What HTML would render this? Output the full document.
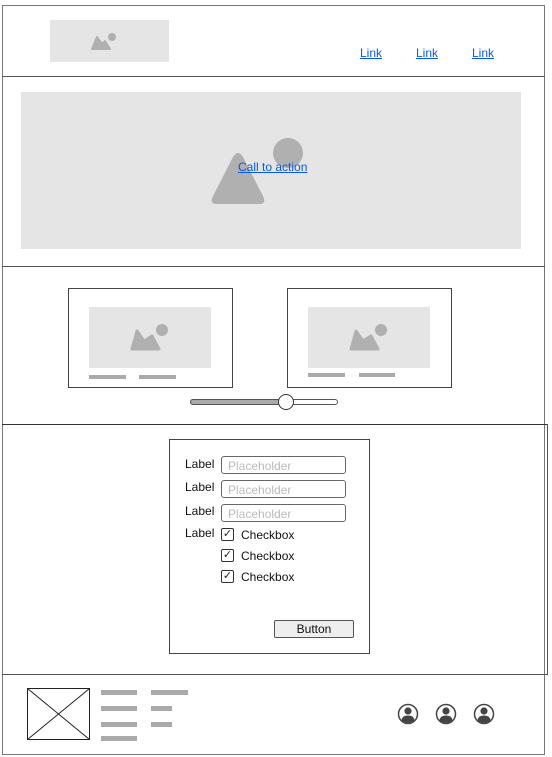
<!DOCTYPE html>
<html><head><style>
*{margin:0;padding:0;box-sizing:border-box}
body{width:552px;height:757px;background:#fff;position:relative;font-family:"Liberation Sans",Arial,sans-serif;overflow:hidden}
.a{position:absolute}
.g{background:#e5e5e5}
.bar{position:absolute;background:#aaa;height:4px}
a{color:#0a5ae0;font-size:12px;text-decoration:underline;position:absolute}
.lbl{position:absolute;font-size:12px;color:#111}
.inp{position:absolute;left:221px;width:125px;height:18px;border:1px solid #666;border-radius:3px;font-size:12px;color:#bbb;padding:2px 0 0 6px}
.cb{position:absolute;left:221px;width:13px;height:13px;border:1px solid #333;border-radius:2px;font-size:11px;line-height:11px;text-align:center;color:#222}
.ct{position:absolute;left:241px;font-size:12px;color:#111}
</style></head><body>
<div class="a" style="left:2px;top:5px;width:543px;height:750px;border:1px solid #777"></div>
<div class="a" style="left:2px;top:76px;width:543px;height:1px;background:#555"></div>
<div class="a" style="left:2px;top:266px;width:543px;height:1px;background:#555"></div>
<div class="a" style="left:2px;top:424px;width:546px;height:1px;background:#333"></div>
<div class="a" style="left:547px;top:424px;width:1px;height:251px;background:#555"></div>
<div class="a" style="left:2px;top:674px;width:546px;height:1px;background:#555"></div>

<div class="a g" style="left:50px;top:20px;width:119px;height:42px"></div>
<svg class="a" style="left:91px;top:30px" width="36" height="24"><circle cx="21" cy="7" r="4" fill="#b0b0b0"/><path d="M1 19 L6 7 L11 14 L14 11 L19 19 Z" fill="#b0b0b0" stroke="#b0b0b0" stroke-width="2" stroke-linejoin="round"/></svg>
<a style="left:360px;top:46px">Link</a>
<a style="left:416px;top:46px">Link</a>
<a style="left:472px;top:46px">Link</a>

<div class="a g" style="left:21px;top:92px;width:500px;height:157px"></div>
<svg class="a" style="left:200px;top:130px" width="130" height="80"><circle cx="88" cy="23" r="15" fill="#b0b0b0"/><path d="M17 74 Q9 74 13 66 L32 29 Q38 17 44 29 L63 66 Q67 74 59 74 Z" fill="#b0b0b0"/></svg>
<a style="left:238px;top:160px">Call to action</a>

<div class="a" style="left:68px;top:288px;width:165px;height:100px;border:1px solid #444"></div>
<div class="a g" style="left:89px;top:307px;width:122px;height:61px"></div>
<svg class="a" style="left:126px;top:320px" width="50" height="34"><circle cx="36" cy="10" r="6" fill="#b0b0b0"/><path d="M6 29 L11 11 L18 21 L26 16 L33 29 Z" fill="#b0b0b0" stroke="#b0b0b0" stroke-width="3" stroke-linejoin="round"/></svg>
<div class="bar" style="left:89px;top:375px;width:37px;height:4px"></div>
<div class="bar" style="left:139px;top:375px;width:37px;height:4px"></div>

<div class="a" style="left:287px;top:288px;width:165px;height:100px;border:1px solid #444"></div>
<div class="a g" style="left:308px;top:307px;width:122px;height:61px"></div>
<svg class="a" style="left:345px;top:320px" width="50" height="34"><circle cx="36" cy="10" r="6" fill="#b0b0b0"/><path d="M6 29 L11 11 L18 21 L26 16 L33 29 Z" fill="#b0b0b0" stroke="#b0b0b0" stroke-width="3" stroke-linejoin="round"/></svg>
<div class="bar" style="left:308px;top:373px;width:37px;height:4px"></div>
<div class="bar" style="left:359px;top:373px;width:36px;height:4px"></div>

<div class="a" style="left:190px;top:399px;width:148px;height:6px;border:1px solid #555;border-radius:3px"></div>
<div class="a" style="left:190px;top:399px;width:96px;height:6px;border:1px solid #555;border-radius:3px;background:#aaa"></div>
<div class="a" style="left:278px;top:394px;width:16px;height:16px;border:1px solid #333;border-radius:50%;background:#fff"></div>

<div class="a" style="left:169px;top:439px;width:201px;height:215px;border:1px solid #444"></div>
<div class="lbl" style="left:185px;top:457px">Label</div>
<div class="lbl" style="left:185px;top:480px">Label</div>
<div class="lbl" style="left:185px;top:504px">Label</div>
<div class="lbl" style="left:185px;top:526px">Label</div>
<div class="inp" style="top:456px">Placeholder</div>
<div class="inp" style="top:480px">Placeholder</div>
<div class="inp" style="top:504px">Placeholder</div>
<div class="cb" style="top:528px">✓</div><div class="ct" style="top:528px">Checkbox</div>
<div class="cb" style="top:549px">✓</div><div class="ct" style="top:549px">Checkbox</div>
<div class="cb" style="top:570px">✓</div><div class="ct" style="top:570px">Checkbox</div>
<div class="a" style="left:274px;top:620px;width:80px;height:18px;border:1px solid #555;border-radius:2px;background:#eee;font-size:12px;text-align:center;line-height:16px;color:#111">Button</div>

<svg class="a" style="left:27px;top:688px" width="64" height="53"><rect x="0.5" y="0.5" width="62" height="51" fill="none" stroke="#222"/><path d="M0.5 0.5 L62.5 51.5 M62.5 0.5 L0.5 51.5" stroke="#222"/></svg>
<div class="bar" style="left:101px;top:690px;width:36px;height:5px"></div>
<div class="bar" style="left:101px;top:706px;width:36px;height:5px"></div>
<div class="bar" style="left:101px;top:722px;width:36px;height:5px"></div>
<div class="bar" style="left:101px;top:736px;width:36px;height:5px"></div>
<div class="bar" style="left:151px;top:690px;width:37px;height:5px"></div>
<div class="bar" style="left:151px;top:706px;width:21px;height:5px"></div>
<div class="bar" style="left:151px;top:722px;width:21px;height:5px"></div>
<svg class="a" style="left:396px;top:702px" width="100" height="24">
<g id="av"><circle cx="12" cy="12" r="9.5" fill="#fff" stroke="#444" stroke-width="1.5"/><circle cx="12" cy="9" r="3.6" fill="#444"/><path d="M5.5 18.5 Q6 13.5 12 13.5 Q18 13.5 18.5 18.5 Q12 23 5.5 18.5Z" fill="#444"/></g>
<use href="#av" x="38"/><use href="#av" x="76"/>
</svg>
</body></html>
